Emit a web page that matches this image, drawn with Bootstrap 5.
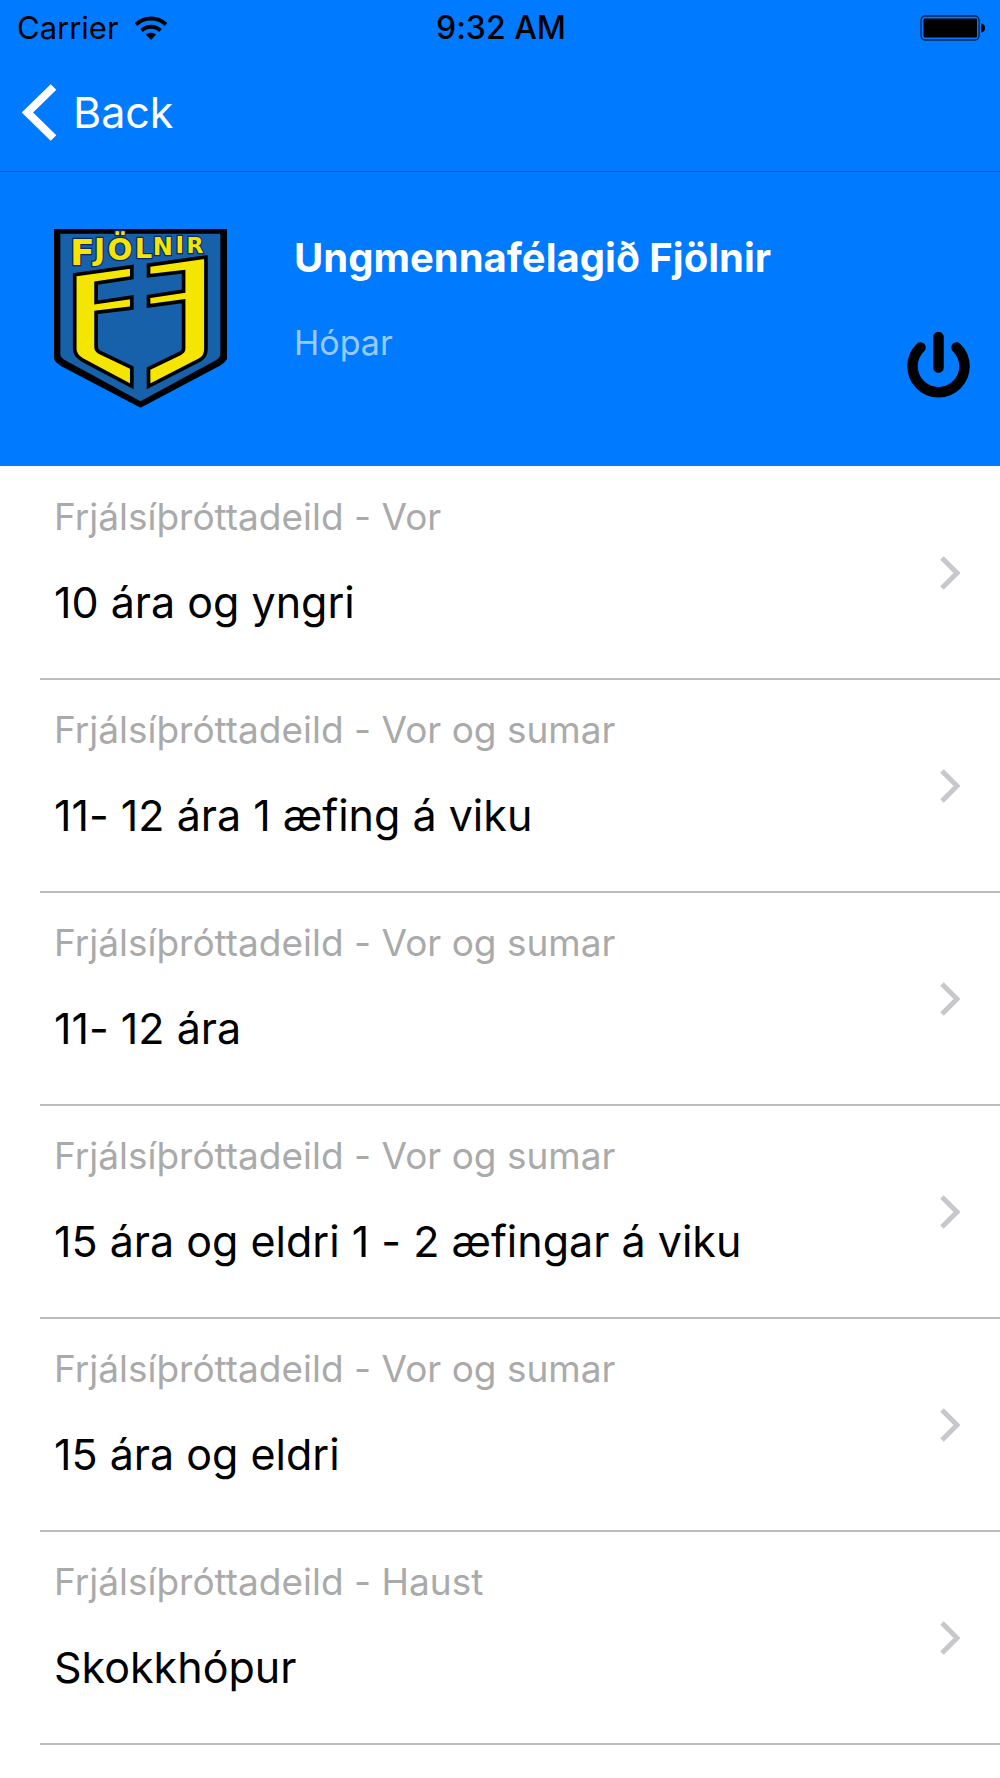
<!DOCTYPE html>
<html lang="is">
<head>
<meta charset="utf-8">
<meta name="viewport" content="width=device-width, initial-scale=1">
<title>Ungmennafélagið Fjölnir</title>
<link href="https://cdn.jsdelivr.net/npm/bootstrap@5.3.0/dist/css/bootstrap.min.css" rel="stylesheet">
<style>
  body { font-family: Inter, "Liberation Sans", sans-serif; font-variant-ligatures: no-contextual; background: #fff; color: #000; }
  svg { display: block; flex: none; }
  .app-top { background: #007aff; }
  .status-bar { height: 54px; padding: 1px 15px 0 17px; font-size: 31px; line-height: 53px; }
  .clock { font-size: 32px; }
  .nav-strip { height: 118px; padding: 0 22px 1px; border-bottom: 1px solid #0058b8; }
  .back-link { gap: 16px; font-size: 43px; line-height: 54px; }
  .club-head { height: 294px; padding: 0 30px 0 54px; }
  .crest { margin-top: 57px; }
  .club-text { margin: 62px 0 0 67px; }
  .club-name { font-size: 40px; line-height: 48px; margin-bottom: 39px; }
  .club-sub { font-size: 34px; line-height: 44px; color: #99caff; }
  .power-btn { margin-top: 160px; }
  .groups { margin: 1px 0 0 40px; }
  .groups .group-row { height: 213px; padding: 28px 40px 0 14px; border: 0; border-bottom: 2px solid #bcbcbe; border-radius: 0; background: #fff; color: #000; }
  .season { font-size: 37px; line-height: 44px; color: #aaa; margin-bottom: 36px; }
  .group-name { font-size: 43px; line-height: 54px; }
  .row-arrow { margin-top: 61px; }
</style>
</head>
<body>
<svg class="d-none" aria-hidden="true">
  <symbol id="arrow" viewBox="0 0 20 34"><path d="M2 2 17 17 2 32" fill="none" stroke="#c7c7cc" stroke-width="5"/></symbol>
</svg>
<header class="app-top">
  <div class="status-bar d-flex align-items-center">
    <div class="col d-flex align-items-center gap-3">
      <span>Carrier</span>
      <svg width="32" height="24" viewBox="0 0 32 24" aria-hidden="true">
        <path d="M1 8.500C9.500.5 22.500.5 31 8.500M6.500 14.500C12 9.500 20 9.500 25.500 14.500" fill="none" stroke="#000" stroke-width="3.800"/>
        <path d="M11 18.500C14 16 18 16 21 18.500L16 24Z"/>
      </svg>
    </div>
    <div class="clock fw-medium">9:32 AM</div>
    <div class="col d-flex justify-content-end">
      <svg width="65" height="26" viewBox="0 0 65 26" aria-label="Battery full" role="img">
        <rect x="1" y="1" width="58" height="24" rx="4" fill="none" stroke="#00254f" stroke-width="1.300"/>
        <rect x="3.500" y="3.500" width="53.500" height="19" rx="1"/>
        <path d="M61 8.500Q65 9 65 13T61 17.500Z"/>
      </svg>
    </div>
  </div>
  <nav class="nav-strip d-flex align-items-center">
    <a href="#" class="back-link d-flex align-items-center text-white text-decoration-none">
      <svg width="35" height="57" viewBox="0 0 35 57" aria-hidden="true"><path d="M31.500 3 5.500 28.500 31.500 54" fill="none" stroke="#fff" stroke-width="8"/></svg>
      <span>Back</span>
    </a>
  </nav>
  <section class="club-head d-flex align-items-start">
    <svg class="crest" width="173" height="179" viewBox="42 43 518 536" role="img" aria-label="Fjölnir">
      <path d="M42 43H560V432Q555 442 540 452L301 578 60 452Q46 442 42 432Z"/>
      <path d="M61 57H540V418Q540 428 528 435L301 559 74 435Q61 428 61 418Z" fill="#1761ab"/>
      <g fill="#f4e600" stroke="#000" stroke-width="11" stroke-linejoin="miter">
        <path d="M104 180 275 156V189L168 205V263L275 247V280L168 293V397Q168 405 178 412L275 458V514L125 434Q104 420 104 402Z"/>
        <path d="M325 151 497 127V402Q497 424 479 435L325 514V461L420 415Q430 410 430 401V259L325 273V245L430 229V171L325 183Z"/>
      </g>
      <text font-family="DejaVu Sans, sans-serif" font-weight="700" fill="#f4e600" stroke="#07286b" stroke-width="7" paint-order="stroke"><tspan x="90" y="150" font-size="108">F</tspan><tspan x="162" y="136" font-size="90">J</tspan><tspan x="202" y="135" font-size="88">Ö</tspan><tspan x="284" y="129" font-size="82">L</tspan><tspan x="338" y="121" font-size="72">N</tspan><tspan x="406" y="116" font-size="68">I</tspan><tspan x="439" y="114" font-size="66">R</tspan></text>
    </svg>
    <div class="club-text flex-grow-1">
      <h1 class="club-name fw-bold text-white">Ungmennafélagið Fjölnir</h1>
      <p class="club-sub mb-0">Hópar</p>
    </div>
    <button type="button" class="power-btn border-0 bg-transparent p-0" aria-label="Log out">
      <svg width="63" height="66" viewBox="0 0 63 66" aria-hidden="true"><path d="M13.500 15.500A26 26 0 1 0 49.500 15.500M31.500 5V35.500" fill="none" stroke="#000" stroke-width="10.500" stroke-linecap="round"/></svg>
    </button>
  </section>
</header>
<main class="groups list-group">
  <a href="#" class="group-row list-group-item d-flex justify-content-between align-items-start"><div><p class="season">Frjálsíþróttadeild - Vor</p><p class="group-name mb-0">10 ára og yngri</p></div><svg class="row-arrow" width="20" height="34" aria-hidden="true"><use href="#arrow"/></svg></a>
  <a href="#" class="group-row list-group-item d-flex justify-content-between align-items-start"><div><p class="season">Frjálsíþróttadeild - Vor og sumar</p><p class="group-name mb-0">11- 12 ára 1 æfing á viku</p></div><svg class="row-arrow" width="20" height="34" aria-hidden="true"><use href="#arrow"/></svg></a>
  <a href="#" class="group-row list-group-item d-flex justify-content-between align-items-start"><div><p class="season">Frjálsíþróttadeild - Vor og sumar</p><p class="group-name mb-0">11- 12 ára</p></div><svg class="row-arrow" width="20" height="34" aria-hidden="true"><use href="#arrow"/></svg></a>
  <a href="#" class="group-row list-group-item d-flex justify-content-between align-items-start"><div><p class="season">Frjálsíþróttadeild - Vor og sumar</p><p class="group-name mb-0">15 ára og eldri 1 - 2 æfingar á viku</p></div><svg class="row-arrow" width="20" height="34" aria-hidden="true"><use href="#arrow"/></svg></a>
  <a href="#" class="group-row list-group-item d-flex justify-content-between align-items-start"><div><p class="season">Frjálsíþróttadeild - Vor og sumar</p><p class="group-name mb-0">15 ára og eldri</p></div><svg class="row-arrow" width="20" height="34" aria-hidden="true"><use href="#arrow"/></svg></a>
  <a href="#" class="group-row list-group-item d-flex justify-content-between align-items-start"><div><p class="season">Frjálsíþróttadeild - Haust</p><p class="group-name mb-0">Skokkhópur</p></div><svg class="row-arrow" width="20" height="34" aria-hidden="true"><use href="#arrow"/></svg></a>
</main>
<script src="https://cdn.jsdelivr.net/npm/bootstrap@5.3.0/dist/js/bootstrap.bundle.min.js"></script>
</body>
</html>
